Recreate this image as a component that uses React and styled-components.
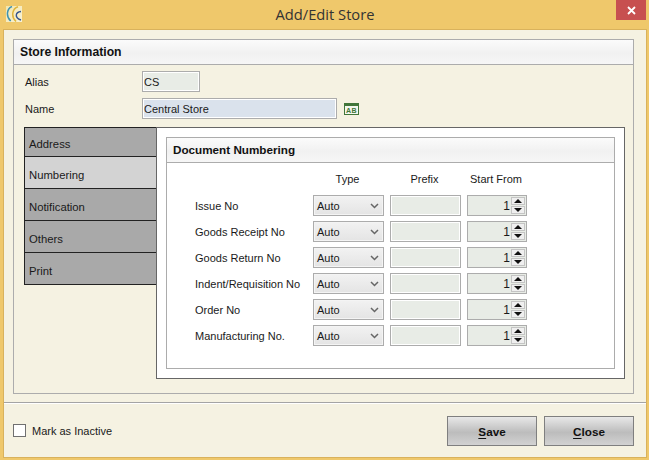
import React from "react";
import styled, { createGlobalStyle } from "styled-components";

const GlobalStyle = createGlobalStyle`
  html, body {
    margin: 0;
    padding: 0;
    background: #efc86b;
  }
  * {
    box-sizing: border-box;
  }
`;

const Window = styled.div`
  width: 649px;
  height: 460px;
  display: flex;
  flex-direction: column;
  background: #efc86b;
  padding: 0 2px 2px 3px;
  font-family: "Liberation Sans", Arial, sans-serif;
  font-size: 11px;
  color: #1a1a1a;
  overflow: hidden;
`;

const TitleBar = styled.div`
  height: 29px;
  flex: none;
  display: grid;
  grid-template-columns: 1fr auto 1fr;
  align-items: start;
`;

const Logo = styled.svg`
  width: 16px;
  height: 16px;
  margin: 6px 0 0 3px;
  background: linear-gradient(135deg, #f3e6ae, #f8f2d4);
`;

const Title = styled.div`
  font-family: "Open Sans", sans-serif;
  font-size: 14.7px;
  line-height: 19px;
  color: #333;
  padding-top: 5px;
`;

const CloseBox = styled.div`
  justify-self: end;
  width: 30px;
  height: 20px;
  margin-right: 1px;
  background: #c75050;
  display: flex;
  align-items: center;
  justify-content: center;
`;

const Body = styled.div`
  flex: 1;
  display: flex;
  flex-direction: column;
  background: #f5f2e2;
  border: 1px solid #d9b25c;
`;

const Content = styled.div`
  height: 372px;
  flex: none;
  padding: 9px 12px 8px 9px;
`;

const GroupBox = styled.div`
  height: 100%;
  border: 1px solid #acacac;
  display: flex;
  flex-direction: column;
  background: ${(p) => p.$bg || "transparent"};
`;

const GroupHeader = styled.div`
  height: 25px;
  flex: none;
  display: flex;
  align-items: center;
  padding: 0 0 ${(p) => p.$lift || 0}px 6px;
  font-weight: bold;
  font-size: ${(p) => p.$size}px;
  color: #111;
  background: linear-gradient(#fbfbfb, #f1f1f1 55%, #f6f6f6);
  border-bottom: 1px solid #acacac;
`;

const StoreForm = styled.div`
  flex: 1;
  display: flex;
  flex-direction: column;
  padding: 6px 8px 0 10px;
`;

const FieldRow = styled.div`
  display: flex;
  align-items: center;
  height: 21px;
  margin-bottom: 6px;
`;

const FieldLabel = styled.div`
  width: 118px;
  padding-left: 1px;
`;

const TextBox = styled.input`
  width: ${(p) => p.$width}px;
  height: 21px;
  padding: 0 0 0 1px;
  font: 11px "Liberation Sans", Arial, sans-serif;
  color: #1a1a1a;
  background: ${(p) => p.$bg};
  border: 1px solid #acacac;
  box-shadow: inset 0 0 0 1px #fff;
  outline: none;
`;

const AbIcon = styled.svg`
  width: 15px;
  height: 12px;
  margin-left: 7px;
`;

const TabArea = styled.div`
  display: flex;
  height: 252px;
  margin-top: 2px;
`;

const TabList = styled.div`
  width: 133px;
  height: 158px;
  flex: none;
  display: flex;
  flex-direction: column;
  border: 1px solid #222;
  border-right: none;
`;

const Tab = styled.div`
  height: ${(p) => (p.$first ? 28 : 32)}px;
  flex: none;
  display: flex;
  align-items: center;
  padding: ${(p) => (p.$first ? 3 : 4)}px 0 0 4px;
  font-size: 11.3px;
  background: ${(p) => (p.$active ? "#d3d3d3" : "#a9a9a9")};
  border-top: ${(p) => (p.$first ? "none" : "1px solid #222")};
`;

const TabPanel = styled.div`
  flex: 1;
  background: #fff;
  border: 1px solid #666;
  padding: 9px;
  margin-left: -1px;
`;

const NumberGrid = styled.div`
  display: grid;
  grid-template-columns: 112px 71px 71px 60px;
  column-gap: 6px;
  row-gap: 5px;
  padding: 9px 0 0 28px;
  align-items: center;
`;

const ColumnHead = styled.div`
  height: 14px;
  line-height: 14px;
  text-align: center;
  padding-right: 2px;
  margin-bottom: 4px;
`;

const RowLabel = styled.div`
  white-space: nowrap;
`;

const Combo = styled.div`
  height: 21px;
  display: flex;
  align-items: center;
  justify-content: space-between;
  padding: 0 4px 0 3px;
  background: linear-gradient(#f2f2f2, #e4e4e4);
  border: 1px solid #acacac;
  box-shadow: inset 0 0 0 1px #f4f4f4;
`;

const PrefixBox = styled.div`
  height: 21px;
  background: #e8ece6;
  border: 1px solid #acacac;
  box-shadow: inset 0 0 0 1px #fff;
`;

const Spinner = styled.div`
  height: 21px;
  display: flex;
  align-items: center;
  justify-content: flex-end;
  gap: 1px;
  padding-right: 1px;
  font-size: 12px;
  background: #e8ece6;
  border: 1px solid #acacac;
`;

const SpinButtons = styled.div`
  width: 14px;
  height: 17px;
  display: flex;
  flex-direction: column;
  gap: 1px;
`;

const SpinButton = styled.div`
  flex: 1;
  background: #efefef;
  border: 1px solid #c4c4c4;
  display: flex;
  align-items: center;
  justify-content: center;

  &::after {
    content: "";
    border-left: 4px solid transparent;
    border-right: 4px solid transparent;
    ${(p) => (p.$down ? "border-top" : "border-bottom")}: 4px solid #111;
  }
`;

const Footer = styled.div`
  flex: 1;
  display: flex;
  align-items: flex-start;
  justify-content: space-between;
  padding: 13px 12px 0 9px;
  border-top: 1px solid #a4a4a4;
  box-shadow: inset 0 1px 0 #fff;
`;

const CheckRow = styled.label`
  display: flex;
  align-items: center;
  gap: 6px;
  margin-top: 8px;
`;

const CheckBox = styled.span`
  width: 13px;
  height: 13px;
  background: #fff;
  border: 1px solid #707070;
`;

const ButtonRow = styled.div`
  display: flex;
  gap: 7px;
`;

const Button = styled.button`
  width: 90px;
  height: 30px;
  padding: 0;
  font: bold 11.7px "Liberation Sans", Arial, sans-serif;
  color: #111;
  background: linear-gradient(#e8e8e8, #bcbcbc 55%, #d2d2d2);
  border: 1px solid #7f7f7f;

  u {
    text-underline-offset: 2px;
  }
`;

const Chevron = () => (
  <svg width="9" height="6" viewBox="0 0 9 6">
    <path d="M1 1l3.500 3.500L8 1" fill="none" stroke="#666" strokeWidth="1.500" />
  </svg>
);

const rows = [
  "Issue No",
  "Goods Receipt No",
  "Goods Return No",
  "Indent/Requisition No",
  "Order No",
  "Manufacturing No.",
];

const tabs = ["Address", "Numbering", "Notification", "Others", "Print"];

export default function App() {
  return (
    <Window>
      <GlobalStyle />
      <TitleBar>
        <Logo viewBox="0 0 16 16">
          <path d="M6 0.500C1 2.500 -0.500 10 4.700 15" fill="none" stroke="#3f93b0" strokeWidth="1.500" />
          <path d="M12 0.800C6.500 2.500 4.500 10 10 15.500" fill="none" stroke="#e0b53a" strokeWidth="1.500" />
          <path d="M15 5.500C9.500 6 8 11.500 15 14" fill="none" stroke="#34558f" strokeWidth="1.400" />
        </Logo>
        <Title>Add/Edit Store</Title>
        <CloseBox>
          <svg width="9" height="9" viewBox="0 0 9 9">
            <path d="M1 1l7 7M8 1L1 8" stroke="#fff" strokeWidth="1.800" />
          </svg>
        </CloseBox>
      </TitleBar>
      <Body>
        <Content>
          <GroupBox>
            <GroupHeader $size={12.2}>Store Information</GroupHeader>
            <StoreForm>
              <FieldRow>
                <FieldLabel>Alias</FieldLabel>
                <TextBox $width={58} $bg="#e8ece6" value="CS" readOnly />
              </FieldRow>
              <FieldRow>
                <FieldLabel>Name</FieldLabel>
                <TextBox $width={195} $bg="#dae2ec" value="Central Store" readOnly />
                <AbIcon viewBox="0 0 15 12">
                  <rect x="0.500" y="0.500" width="14" height="11" fill="#f4f7ee" stroke="#41763a" />
                  <rect x="0" y="0" width="15" height="3" fill="#41763a" />
                  <text x="7.500" y="10" textAnchor="middle" fontFamily="Liberation Sans" fontWeight="bold" fontSize="7" letterSpacing="0.500" fill="#41763a">
                    AB
                  </text>
                </AbIcon>
              </FieldRow>
              <TabArea>
                <TabList>
                  {tabs.map((t, i) => (
                    <Tab key={t} $first={i === 0} $active={t === "Numbering"}>
                      {t}
                    </Tab>
                  ))}
                </TabList>
                <TabPanel>
                  <GroupBox $bg="#fff">
                    <GroupHeader $size={11.7} $lift={2}>Document Numbering</GroupHeader>
                    <NumberGrid>
                      <ColumnHead />
                      <ColumnHead>Type</ColumnHead>
                      <ColumnHead>Prefix</ColumnHead>
                      <ColumnHead>Start From</ColumnHead>
                      {rows.map((r) => (
                        <React.Fragment key={r}>
                          <RowLabel>{r}</RowLabel>
                          <Combo>
                            Auto
                            <Chevron />
                          </Combo>
                          <PrefixBox />
                          <Spinner>
                            1
                            <SpinButtons>
                              <SpinButton />
                              <SpinButton $down />
                            </SpinButtons>
                          </Spinner>
                        </React.Fragment>
                      ))}
                    </NumberGrid>
                  </GroupBox>
                </TabPanel>
              </TabArea>
            </StoreForm>
          </GroupBox>
        </Content>
        <Footer>
          <CheckRow>
            <CheckBox />
            Mark as Inactive
          </CheckRow>
          <ButtonRow>
            <Button>
              <u>S</u>ave
            </Button>
            <Button>
              <u>C</u>lose
            </Button>
          </ButtonRow>
        </Footer>
      </Body>
    </Window>
  );
}
